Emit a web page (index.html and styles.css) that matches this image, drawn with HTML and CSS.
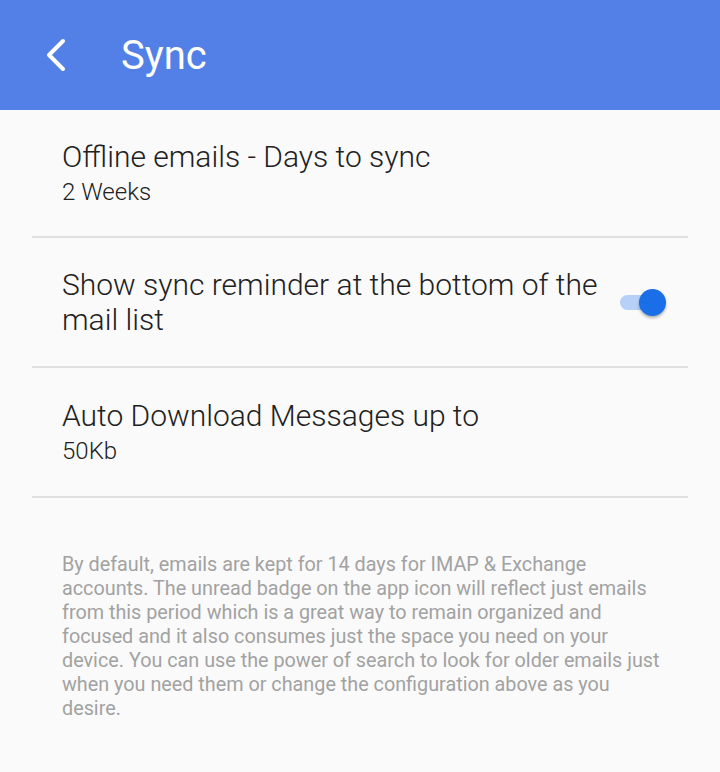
FILE: index.html
```html
<!DOCTYPE html>
<html lang="en">
<head>
    <meta charset="UTF-8">
    <meta name="viewport" content="width=device-width, initial-scale=1.0">
    <title>Sync</title>
    <link rel="stylesheet" href="styles.css">
</head>
<body>
    <header class="app-bar">
        <button class="back-btn" aria-label="Back">
            <svg width="24" height="36" viewBox="0 0 24 36">
                <path d="M19 4 L5 18 L19 32" fill="none" stroke="#fff" stroke-width="4" stroke-linecap="round" stroke-linejoin="round"/>
            </svg>
        </button>
        <h1>Sync</h1>
    </header>

    <ul class="settings-list">
        <li class="setting">
            <div class="setting-text">
                <div class="setting-title">Offline emails - Days to sync</div>
                <div class="setting-value">2 Weeks</div>
            </div>
        </li>
        <li class="setting">
            <div class="setting-text">
                <div class="setting-title">Show sync reminder at the bottom of the mail list</div>
            </div>
            <span class="switch on"><span class="thumb"></span></span>
        </li>
        <li class="setting">
            <div class="setting-text">
                <div class="setting-title">Auto Download Messages up to</div>
                <div class="setting-value">50Kb</div>
            </div>
        </li>
    </ul>

    <p class="note">By default, emails are kept for 14 days for IMAP &amp; Exchange accounts. The unread badge on the app icon will reflect just emails from this period which is a great way to remain organized and focused and it also consumes just the space you need on your device. You can use the power of search to look for older emails just when you need them or change the configuration above as you desire.</p>
</body>
</html>
```

FILE: styles.css
```css
body {
    margin: 0;
    padding: 0;
    font-family: Roboto, "Noto Sans", sans-serif;
    background-color: #fafafa;
    color: #212121;
}
.app-bar {
    height: 110px;
    background: #5380e7;
    display: flex;
    align-items: center;
    padding-left: 44px;
    box-sizing: border-box;
}
.back-btn {
    background: none;
    border: none;
    padding: 0;
    width: 24px;
    height: 36px;
    cursor: pointer;
}
.app-bar h1 {
    margin: 0 0 0 53px;
    font-size: 40px;
    font-weight: 400;
    color: #fff;
}
.settings-list {
    list-style: none;
    margin: 0 32px;
    padding: 0;
}
.setting {
    display: flex;
    align-items: center;
    min-height: 130px;
    padding: 0 32px 0 30px;
    border-bottom: 2px solid #e0e0e0;
    box-sizing: border-box;
}
.setting:first-child {
    min-height: 128px;
}
.setting-text {
    flex: 1;
}
.setting-title {
    font-size: 30px;
    font-weight: 300;
    line-height: 35px;
}
.setting-value {
    font-size: 24px;
    font-weight: 300;
    line-height: 30px;
    margin-top: 3px;
}
.switch {
    position: relative;
    width: 36px;
    height: 15px;
    border-radius: 8px;
    background: #b7d0f8;
    margin-left: 16px;
}
.switch .thumb {
    position: absolute;
    right: -10px;
    top: -6px;
    width: 27px;
    height: 27px;
    border-radius: 50%;
    background: #1a6fe8;
    box-shadow: 0 2px 3px rgba(0, 0, 0, 0.3);
}
.note {
    max-width: 600px;
    margin: 55px 0 0 62px;
    font-size: 19.8px;
    line-height: 24px;
    color: #a2a2a2;
}
```
